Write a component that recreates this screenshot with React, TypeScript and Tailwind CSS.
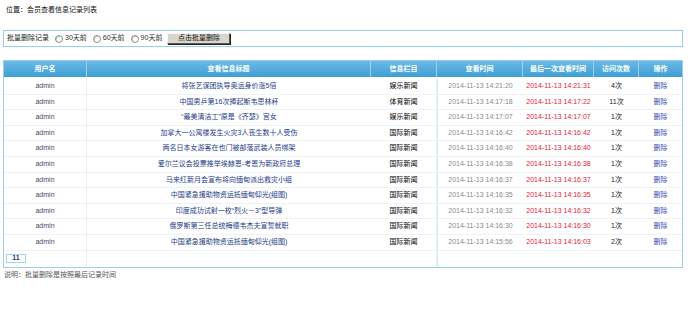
import React from "react";

const rows = [
  ["将张艺谋团执导奥运身价涨5倍", "娱乐新闻", "2014-11-13 14:21:20", "2014-11-13 14:21:31", "4次"],
  ["中国男乒第16次捧起斯韦思林杯", "体育新闻", "2014-11-13 14:17:18", "2014-11-13 14:17:22", "11次"],
  ["“最美清洁工”原是《齐瑟》宫女", "娱乐新闻", "2014-11-13 14:17:07", "2014-11-13 14:17:07", "1次"],
  ["加拿大一公寓楼发生火灾3人丧生数十人受伤", "国际新闻", "2014-11-13 14:16:42", "2014-11-13 14:16:42", "1次"],
  ["两名日本女游客在也门被部落武装人员绑架", "国际新闻", "2014-11-13 14:16:40", "2014-11-13 14:16:40", "1次"],
  ["爱尔兰议会投票推举埃赫恩-考恩为新政府总理", "国际新闻", "2014-11-13 14:16:38", "2014-11-13 14:16:38", "1次"],
  ["马来红新月会宣布将向缅甸派出救灾小组", "国际新闻", "2014-11-13 14:16:37", "2014-11-13 14:16:37", "1次"],
  ["中国紧急援助物资运抵缅甸仰光(组图)", "国际新闻", "2014-11-13 14:16:35", "2014-11-13 14:16:35", "1次"],
  ["印度成功试射一枚“烈火－3”型导弹", "国际新闻", "2014-11-13 14:16:32", "2014-11-13 14:16:32", "1次"],
  ["俄罗斯第三任总统梅德韦杰夫宣誓就职", "国际新闻", "2014-11-13 14:16:30", "2014-11-13 14:16:30", "1次"],
  ["中国紧急援助物资运抵缅甸仰光(组图)", "国际新闻", "2014-11-13 14:15:56", "2014-11-13 14:16:03", "2次"],
];

const cols = "grid grid-cols-[83px_284px_66px_86px_71px_45px_43px]";

function Radio() {
  return (
    <span className="inline-block w-[8px] h-[8px] rounded-full border border-[#8c8c8c] bg-white shadow-[inset_1px_1px_0_#cfcfcf]" />
  );
}

export default function App() {
  return (
    <div
      className="w-[700px] h-[312px] bg-white text-[7px] text-[#222] overflow-hidden"
      style={{ fontFamily: '"Liberation Sans", "Noto Sans CJK SC", sans-serif' }}
    >
      <div className="h-[20px] flex items-center pl-[6px] text-[#111]">位置：会员查看信息记录列表</div>

      <div className="mt-[10px] ml-[3px] w-[680px] h-[17px] border border-[#9fcde5] shadow-[0_0_1px_#cfe7f4] flex items-center pl-[3px]">
        <span>批量删除记录</span>
        <span className="ml-[6px] flex items-center gap-[2px]"><Radio /><span className="text-[#333]">30天前</span></span>
        <span className="ml-[6px] flex items-center gap-[2px]"><Radio /><span className="text-[#333]">60天前</span></span>
        <span className="ml-[6px] flex items-center gap-[2px]"><Radio /><span className="text-[#333]">90天前</span></span>
        <span className="ml-[5px] w-[63px] h-[11px] flex items-center justify-center bg-[#d9d6ce] border border-t-[#f4f4f4] border-l-[#f4f4f4] border-r-[#5a5a5a] border-b-[#5a5a5a] shadow-[1px_1px_0_#222] text-[#111]">
          点击批量删除
        </span>
      </div>

      <div className="mt-[13px] ml-[3px] w-[680px] border border-[#9fcde5]">
        <div className={`${cols} h-[16px] bg-gradient-to-b from-[#69bae4] to-[#3f9ed5] text-white font-bold`}>
          {["用户名", "查看信息标题", "信息栏目", "查看时间", "最后一次查看时间", "访问次数", "操作"].map((h, i) => (
            <div key={i} className={`flex items-center justify-center ${i < 6 ? "border-r border-[#9ad3ef]" : ""}`}>{h}</div>
          ))}
        </div>
        <div className="h-[2px]" />
        {rows.map((r, i) => (
          <div key={i} className={`${cols} h-[15.6px] border-b border-[#eef3f7]`}>
            <div className="flex items-center justify-center text-[#3f4d68] border-r border-[#e6f0f7]">admin</div>
            <div className="flex items-center justify-center text-[#1d3c86]">{r[0]}</div>
            <div className="flex items-center justify-center text-black border-r border-[#e6f0f7]">{r[1]}</div>
            <div className="flex items-center justify-center text-[#8a8a8a] border-l border-[#d3e8f4]">{r[2]}</div>
            <div className="flex items-center justify-center text-[#e3223a]">{r[3]}</div>
            <div className="flex items-center justify-center text-[#222]">{r[4]}</div>
            <div className="flex items-center justify-center text-[#3c4fb3]">删除</div>
          </div>
        ))}
        <div className={`${cols} h-[16px]`}>
          <div className="flex items-center pl-[2px] border-r border-[#e6f0f7]">
            <span className="w-[20px] h-[9px] border border-[#a8d2e8] flex items-center justify-center font-bold text-[#1b3a78]">11</span>
          </div>
          <div />
          <div className="border-r border-[#e6f0f7]" />
          <div className="border-l border-[#d3e8f4]" />
          <div />
          <div />
          <div />
        </div>
      </div>

      <div className="mt-[2px] pl-[4px] h-[12px] flex items-center text-[#555]">说明：批量删除是按照最后记录时间</div>
    </div>
  );
}
